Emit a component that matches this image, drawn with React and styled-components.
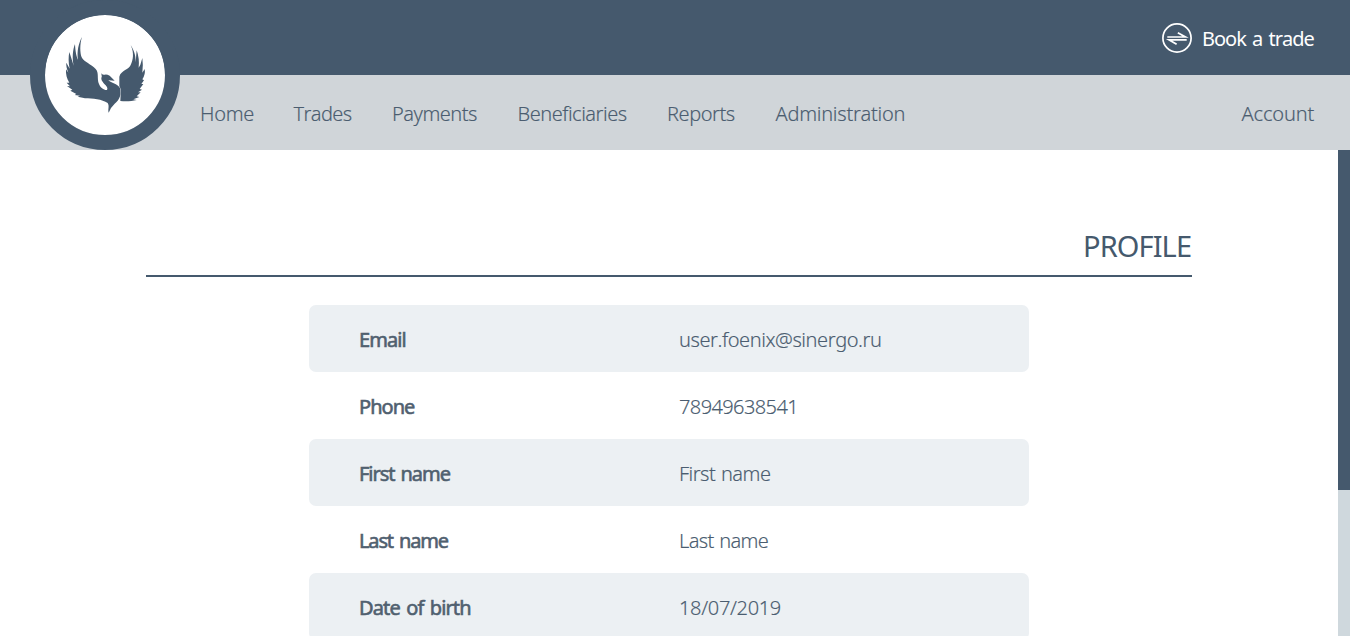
import React from 'react';
import styled, { createGlobalStyle } from 'styled-components';

const GlobalStyle = createGlobalStyle`
  * { box-sizing: border-box; }
  body {
    margin: 0;
    overflow: hidden;
    background: #fff;
    color: #4b5d70;
    font: 300 20px/27px 'Noto Sans', 'Open Sans', sans-serif;
    font-kerning: none;
  }
`;

const Page = styled.div`
  height: 636px;
  overflow: hidden;
  display: flex;
  flex-direction: column;
`;

const Header = styled.header`
  position: relative;
  flex: none;
`;

const TopBar = styled.div`
  height: 75px;
  padding: 0 36px;
  background: #45596d;
  display: flex;
  align-items: center;
  justify-content: flex-end;
`;

const BookTrade = styled.a`
  display: flex;
  align-items: center;
  gap: 10px;
  color: #fff;
  font-weight: 400;
`;

const Label = styled.span`
  display: block;
  white-space: nowrap;
  width: ${(p) => (p.$width ? `${p.$width}px` : 'auto')};
  letter-spacing: ${(p) => p.$spacing || 0}px;
`;

const BookLabel = styled(Label)`
  padding-top: 2px;
  word-spacing: 2px;
`;

const NavBar = styled.nav`
  height: 75px;
  padding: 1px 36px 0 200px;
  background: #d0d5d9;
  display: flex;
  align-items: center;
  gap: 40px;
  -webkit-text-stroke: 0.15px #4b5d70;
`;

const Spacer = styled.div`
  flex: 1;
`;

const Logo = styled.div`
  position: absolute;
  top: 0;
  left: 30px;
  width: 150px;
  height: 150px;
  border: 15px solid #45596d;
  border-radius: 50%;
  background: #fff;
  background-clip: padding-box;
  display: flex;
  align-items: center;
  justify-content: center;
`;

const Body = styled.div`
  flex: 1;
  min-height: 0;
  display: flex;
`;

const Main = styled.main`
  flex: 1;
  padding: 76px 146px 0;
`;

const ScrollTrack = styled.div`
  width: 12px;
  background: #cfd8dd;
`;

const ScrollThumb = styled.div`
  height: 340px;
  background: #45596d;
`;

const Title = styled.h1`
  margin: 0 0 28px;
  height: 51px;
  border-bottom: 2px solid #45596d;
  color: #45596d;
  font-size: 29px;
  line-height: 40px;
  font-weight: 400;
  display: flex;
  justify-content: flex-end;
`;

const Details = styled.dl`
  width: 720px;
  margin: 0 auto;
`;

const Row = styled.div`
  height: 67px;
  padding: 2px 50px 0;
  border-radius: 7px;
  display: grid;
  grid-template-columns: 320px 1fr;
  align-items: center;
  &:nth-child(odd) { background: #ecf0f3; }
`;

const Term = styled.dt`
  font-weight: 400;
  word-spacing: 2px;
  color: #50606f;
  -webkit-text-stroke: 0.6px #50606f;
`;

const Value = styled.dd`
  margin: 0;
  word-spacing: 1px;
  -webkit-text-stroke: 0.15px #4b5d70;
`;

const nav = [
  ['Home', 53.5, -0.3],
  ['Trades', 58.5, -0.6],
  ['Payments', 85.5, -0.5],
  ['Beneficiaries', 109.5, -0.48],
  ['Reports', 68.5, -0.45],
  ['Administration', 130, -0.25],
];

const rows = [
  ['Email', -0.9, 'user.foenix@sinergo.ru', -0.43],
  ['Phone', -0.95, '78949638541', -0.6],
  ['First name', -1.05, 'First name', -0.52],
  ['Last name', -1.15, 'Last name', -0.65],
  ['Date of birth', -0.87, '18/07/2019', -0.33],
];

const Phoenix = () => (
  <svg width="90" height="90" viewBox="0 0 270 270" fill="#45596d">
    <path d="M66 21C59 43 60 68 65 82C72 96 94 103 107 117C118 129 110 145 117 162C121 173 132 181 141 180C147 171 130 162 125 151C122 143 127 139 125 137L124 130Q129 136 134 134Q140 132 149 137L164 152L145 151C151 158 170 160 180 174C184 193 181 207 164 221Q151 233 146 248C143 238 149 228 143 219C126 208 98 205 75 205L53 200L60 197L44 195L49 192L31 182L37 179L21 168L30 169L20 158L28 158C20 147 17 132 18 118L25 128C20 115 18 106 19 98L29 116C25 98 25 80 28 66L34 85L41 107C36 84 38 60 45 42C46 66 50 82 54 89C50 65 56 39 66 21Z" />
    <path d="M212 45C219 60 223 80 213 103C207 120 184 120 178 140L178 169Q184 177 182 193L181 213C197 215 215 214 230 210L220 208L238 201L230 199L242 187L234 187L246 179L239 177L250 162L244 162L252 151L247 148Q257 133 254 117L247 128Q250 105 247 84L241 104L236 113Q239 86 230 61L227 97C227 72 221 60 212 45Z" />
  </svg>
);

const TradeIcon = () => (
  <svg width="30" height="30" viewBox="0 0 30 30" fill="none" stroke="#fff">
    <circle cx="15" cy="15" r="14.1" strokeWidth="1.7" />
    <path d="M5.3 14H23.5L15.8 9.7M24.7 16.8H7L14.6 21.2" strokeWidth="1.7" />
  </svg>
);

export default function App() {
  return (
    <Page>
      <GlobalStyle />
      <Header>
        <TopBar>
          <BookTrade>
            <TradeIcon />
            <BookLabel $width={112} $spacing={-1}>Book a trade</BookLabel>
          </BookTrade>
        </TopBar>
        <NavBar>
          {nav.map(([text, width, spacing]) => (
            <Label key={text} $width={width} $spacing={spacing}>{text}</Label>
          ))}
          <Spacer />
          <Label $width={72.5} $spacing={-0.15}>Account</Label>
        </NavBar>
        <Logo><Phoenix /></Logo>
      </Header>
      <Body>
        <Main>
          <Title><Label $width={109} $spacing={-0.9}>PROFILE</Label></Title>
          <Details>
            {rows.map(([term, ts, value, vs]) => (
              <Row key={term}>
                <Term><Label $spacing={ts}>{term}</Label></Term>
                <Value><Label $spacing={vs}>{value}</Label></Value>
              </Row>
            ))}
          </Details>
        </Main>
        <ScrollTrack><ScrollThumb /></ScrollTrack>
      </Body>
    </Page>
  );
}
